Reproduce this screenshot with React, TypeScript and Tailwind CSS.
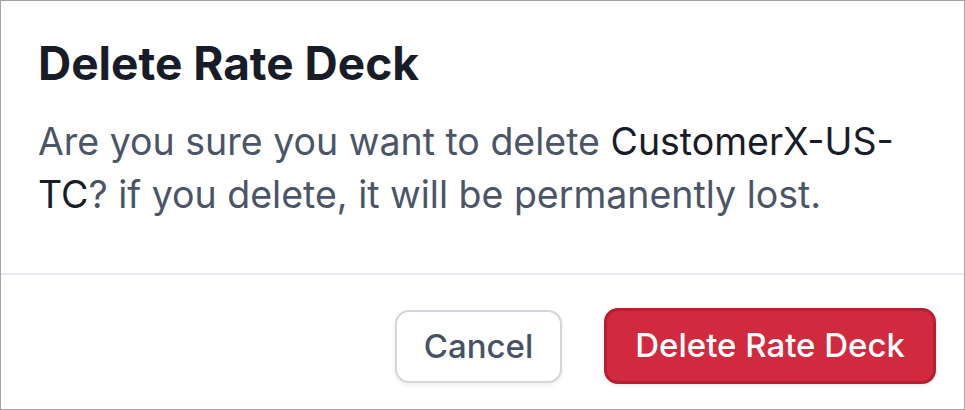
export default function App() {
  return (
    <div
      className="w-[965px] h-[410px] bg-white border border-[#a3a3a3] flex flex-col"
      style={{ fontFamily: 'Inter, "Noto Sans", sans-serif' }}
    >
      <div className="pt-[34px] pl-[37px] pr-[36px] pb-[52px]">
        <h2 className="text-[46px] leading-[56px] font-bold text-[#181c28]">
          Delete Rate Deck
        </h2>
        <p className="mt-[25px] text-[37.5px] leading-[52.5px] text-[#4b5568]">
          Are you sure you want to delete{' '}
          <span className="text-[#181c28]">CustomerX-US-TC</span>? if you delete, it will be
          permanently lost.
        </p>
      </div>
      <div className="border-t-2 border-[#e6e8f4] flex-1 flex justify-end items-start gap-[42px] pt-[33px] pr-[28px]">
        <button
          type="button"
          className="h-[73px] px-[27px] mt-[2px] rounded-[14px] border-2 border-[#d4d6dc] bg-white text-[#475264] text-[33px] font-medium shadow-[0_2px_4px_rgba(0,0,0,0.08)]"
        >
          Cancel
        </button>
        <button
          type="button"
          className="h-[76px] px-[28px] rounded-[14px] border-[3px] border-[#b81d30] bg-[#d12a3f] text-white text-[33px] font-medium shadow-[0_2px_4px_rgba(0,0,0,0.08)]"
        >
          Delete Rate Deck
        </button>
      </div>
    </div>
  );
}
